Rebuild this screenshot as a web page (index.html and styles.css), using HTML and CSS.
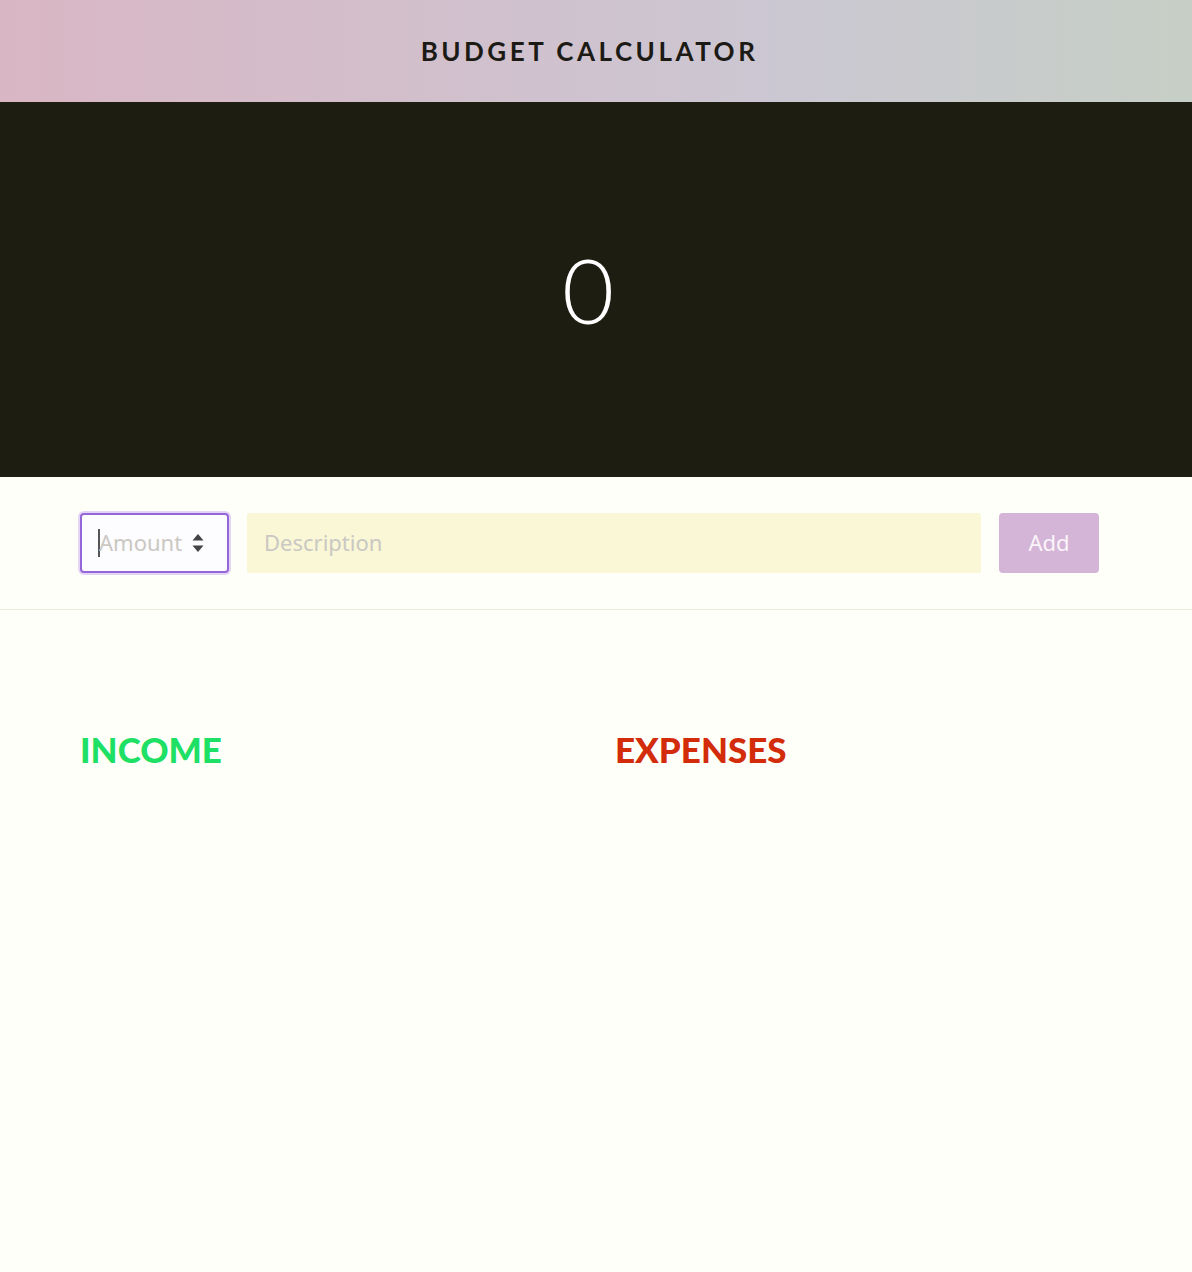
FILE: index.html
```html
<!DOCTYPE html>
<html lang="en">
<head>
<meta charset="utf-8">
<title>Budget Calculator</title>
<link rel="stylesheet" href="styles.css">
</head>
<body>
<header class="top">
  <h1 class="title">BUDGET CALCULATOR</h1>
</header>
<section class="balance">
  <div class="total">0</div>
</section>
<section class="form-row">
  <div class="amount">
    <span class="caret"></span>
    <span class="ph">Amount</span>
    <svg class="spin" width="12" height="24" viewBox="0 0 12 24"><path d="M6 3 L11.5 9.5 L0.5 9.5 Z" fill="#444"/><path d="M6 21 L11.5 14.5 L0.5 14.5 Z" fill="#444"/></svg>
  </div>
  <div class="desc"><span class="ph">Description</span></div>
  <button class="add">Add</button>
</section>
<main class="lists">
  <div class="col"><h2 class="income">INCOME</h2></div>
  <div class="col"><h2 class="expenses">EXPENSES</h2></div>
</main>
</body>
</html>
```

FILE: styles.css
```css
* { box-sizing: border-box; }
html, body { margin: 0; padding: 0; }
body {
  background: #fffffa;
  font-family: "Lato", "Liberation Sans", sans-serif;
  width: 1192px;
  min-height: 1272px;
}
.top {
  height: 102px;
  background: linear-gradient(90deg, #d9b6c4 0%, #d2bfcc 35%, #cbc7d2 65%, #c6cfc6 100%);
  display: flex;
  align-items: center;
  justify-content: center;
  padding-right: 16px;
}
.title {
  margin: 0;
  font-size: 26px;
  font-weight: 700;
  letter-spacing: 3.5px;
  color: #1c1a14;
  padding-left: 3px;
}
.balance {
  height: 375px;
  background: #1d1d12;
  display: flex;
  align-items: center;
  justify-content: center;
  padding-right: 16px;
}
.total {
  color: #ffffff;
  font-family: "Lato", sans-serif;
  font-weight: 300;
  font-size: 90px;
  line-height: 1;
  margin-bottom: 2px;
}
.form-row {
  display: flex;
  align-items: center;
  gap: 18px;
  padding: 36px 93px 36px 80px;
  border-bottom: 1px solid #ecebdc;
}
.amount, .desc, .add {
  height: 60px;
  border-radius: 4px;
  font-family: "Noto Sans", "Open Sans", sans-serif;
  font-size: 22px;
  padding-bottom: 3px;
}
.amount {
  width: 149px;
  border: 2px solid #9566d8;
  box-shadow: 0 0 0 2px #e4d4f6;
  background: #fdfcff;
  display: flex;
  align-items: center;
  padding-left: 16px;
}
.caret {
  width: 2px;
  height: 28px;
  background: #555;
  margin-right: -1px;
  margin-top: 3px;
}
.ph { color: #cac8c2; }
.spin { margin-left: 10px; margin-top: 3px; }
.desc {
  flex: 1;
  background: #f9f7d6;
  border-radius: 2px;
  display: flex;
  align-items: center;
  padding-left: 17px;
}
.add {
  width: 100px;
  border: none;
  background: #d4b5d8;
  color: #fbf4f8;
  padding-top: 0;
  padding-left: 0;
  padding-right: 0;
}
.lists {
  display: grid;
  grid-template-columns: 1fr 1fr;
  column-gap: 38px;
  padding: 118px 80px 0;
}
.lists h2 {
  margin: 0;
  font-size: 35px;
  font-weight: 900;
  line-height: 1.2;
}
.income { color: #1ee064; }
.expenses { color: #d32c0a; }
```
